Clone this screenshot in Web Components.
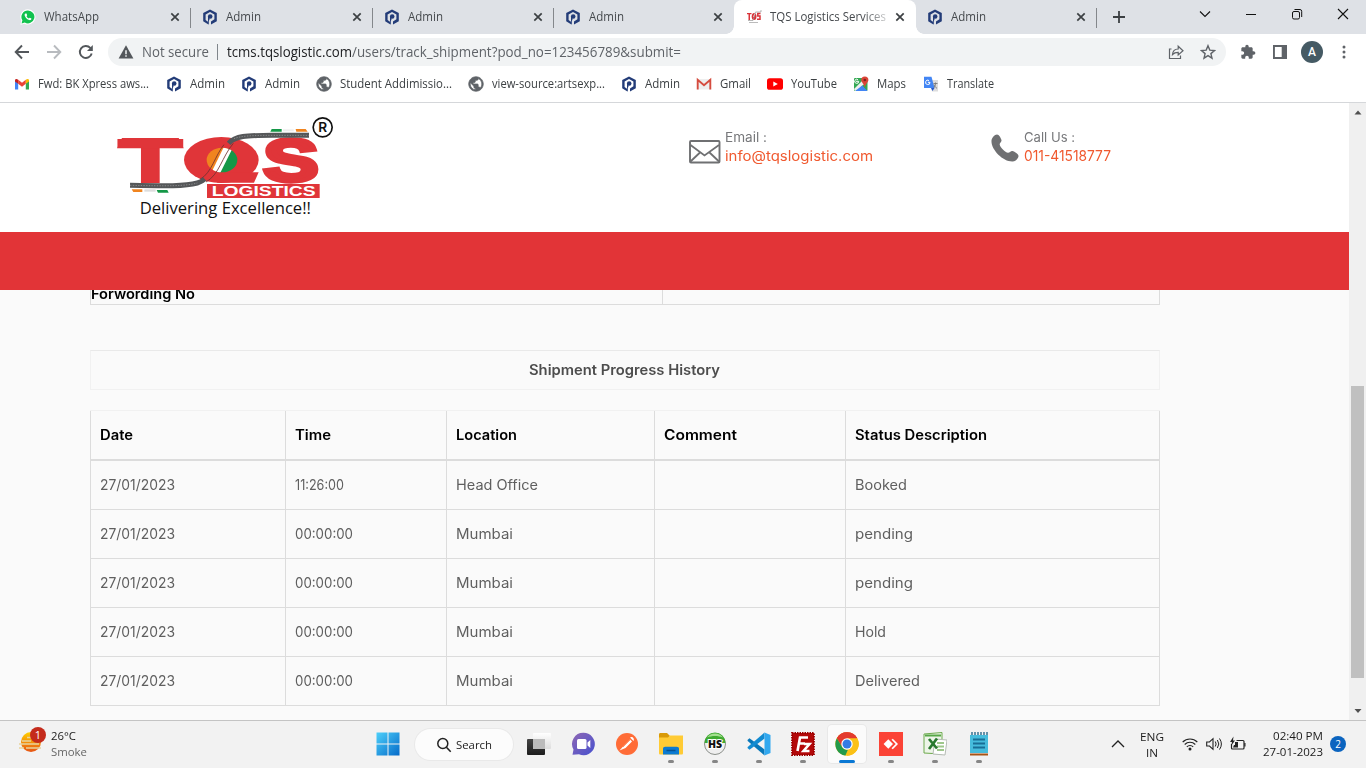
<!DOCTYPE html>
<html lang="en">
<head>
<meta charset="utf-8">
<title>TQS Logistics Services</title>
<style>
html,body{margin:0;padding:0;height:100%;overflow:hidden}
body{font-family:"Open Sans","Noto Sans",sans-serif;font-size:12px;color:#3c4043}
</style>
</head>
<body>
<desktop-screen></desktop-screen>
<script>
const ICONS = {
whatsapp:['0 0 16 16','<path d="M8 .3a7.6 7.6 0 0 0-6.6 11.4L.4 15.7l4.1-1A7.6 7.6 0 1 0 8 .3z" fill="#fff"/><path d="M8 1.4a6.5 6.5 0 0 0-5.6 9.9l-.8 3.1 3.2-.8A6.5 6.5 0 1 0 8 1.4z" fill="#12c24f"/><path d="M5.6 4.4c-.9.2-1.2 1.3-.8 2.3.8 2.200 2.400 3.700 4.500 4.400 1.200.3 2.100-.3 2.100-1.500L9.700 8.700l-.8.9C7.800 9.100 7 8.300 6.500 7.200l.7-.9-.7-1.800z" fill="#fff"/>'],
admin:['0 0 16 16','<path d="M6 15.200V12.800L3.600 11V5.500L8 3l4.400 2.500v4.800L9 12.600v2.900l5.800-3.300V4.100L8 .4 1.200 4.100v8.100z" fill="#233c78"/><circle cx="8.200" cy="7.500" r="2.300" fill="#233c78"/><path d="M6 15.200V8h1.500v2.500L6.800 12v3.500z" fill="#233c78"/>'],
tqs:['0 0 16 16','<path d="M1 4h4.500v1.300H4V11H2.500V5.300H1z" fill="#d9343a"/><ellipse cx="8.100" cy="7.400" rx="2.400" ry="3.500" fill="#d9343a"/><path d="M7.600 7.800 9 4.500" stroke="#fff"/><path d="M14.500 4.500h-2.700v2.600h2.200v3.200h-3" fill="none" stroke="#d9343a" stroke-width="1.500"/><path d="M2 11.500h5L9.500 3h5.500V1" fill="none" stroke="#999" stroke-width=".7"/><path d="M3 13.500h9" stroke="#aaa" stroke-width=".8"/>'],
close:['0 0 16 16','<path d="m4.300 4.300 7.400 7.400m0-7.400-7.400 7.400" stroke="#3c4043" stroke-width="1.700"/>'],
plus:['0 0 16 16','<path d="M8 2v12M2 8h12" stroke="#3c4043" stroke-width="1.800"/>'],
chev:['0 0 16 16','<path d="m3 5.500 5 5 5-5" fill="none" stroke="#111" stroke-width="1.100"/>'],
chevup:['0 0 16 16','<path d="m2 11 6-6 6 6" fill="none" stroke="#222" stroke-width="1.300"/>'],
min:['0 0 16 16','<path d="M3 8.500h10" stroke="#111"/>'],
restore:['0 0 16 16','<rect x="3.500" y="5.500" width="7" height="7.500" rx="1.500" fill="none" stroke="#111"/><path d="M5.500 3.500H11A1.800 1.800 0 0 1 12.700 5.300v5.700" fill="none" stroke="#111"/>'],
wclose:['0 0 16 16','<path d="m3 3 10 10m0-10L3 13" stroke="#111" stroke-width="1.100"/>'],
back:['0 0 16 16','<path d="M15 8H2M8 1.500 1.700 8 8 14.500" fill="none" stroke="#53575b" stroke-width="1.900"/>'],
fwd:['0 0 16 16','<path d="M1 8h13M8 1.500 14.300 8 8 14.500" fill="none" stroke="#b8bbbf" stroke-width="1.900"/>'],
reload:['0 0 16 16','<path d="M13.700 9.500A6 6 0 1 1 12.300 3.900l1.200 1.200" fill="none" stroke="#53575b" stroke-width="1.900"/><path d="M14.800 1v6H9z" fill="#53575b"/>'],
warn:['0 0 16 16','<path d="M8 1.200 15.400 14.500H.6z" fill="#53575b"/><path d="M8 6.200v4M8 11.300v1.500" stroke="#f1f3f4" stroke-width="1.500"/>'],
share:['0 0 16 16','<path d="M3.500 5H1.500v9.500h11v-3" fill="none" stroke="#5f6368" stroke-width="1.200"/><path d="M4.500 10.500c.3-3.600 2.500-5.500 5.700-5.500V2.200l4.800 4.500-4.800 4.200V8.300c-2.500 0-4.200.5-5.700 2.200z" fill="none" stroke="#5f6368" stroke-width="1.200"/>'],
star:['0 0 16 16','<path d="m8 1.700 1.800 4.400 4.700.4-3.600 3.100 1.100 4.600L8 11.700l-4 2.500 1.100-4.600L1.500 6.500l4.700-.4z" fill="none" stroke="#5f6368" stroke-width="1.400"/>'],
puzzle:['0 0 24 24','<path d="M20.500 11H19V7c0-1.100-.9-2-2-2h-4V3.500C13 2.120 11.880 1 10.500 1S8 2.120 8 3.500V5H4c-1.100 0-1.990.9-1.990 2v3.800H3.500c1.490 0 2.700 1.210 2.700 2.700s-1.210 2.700-2.700 2.700H2V20c0 1.100.9 2 2 2h3.800v-1.500c0-1.490 1.210-2.700 2.700-2.700s2.700 1.210 2.700 2.700V22H17c1.100 0 2-.9 2-2v-4h1.500c1.380 0 2.500-1.120 2.500-2.500S21.880 11 20.500 11z" fill="#5f6368"/>'],
panel:['0 0 16 16','<path d="M1 1h14v14H1zm1.900 2v10h6.800V3z" fill="#5f6368" fill-rule="evenodd"/>'],
dots:['0 0 16 16','<g fill="#5f6368"><circle cx="8" cy="3" r="1.500"/><circle cx="8" cy="8" r="1.500"/><circle cx="8" cy="13" r="1.500"/></g>'],
gmail:['0 0 16 16','<path d="M1 4v9.500h3.200V7z" fill="#4285f4"/><path d="M15 4v9.500h-3.200V7z" fill="#34a853"/><path d="M4.200 3.800v4L8 10.700l3.800-2.900v-4L8 6.700z" fill="#ea4335"/><path d="M1 4.300C1 2.800 2.700 2.300 4.200 3.800v4L1 5.500z" fill="#c5221f"/><path d="M15 4.300c0-1.500-1.700-2-3.200-.5v4L15 5.500z" fill="#fbbc04"/>'],
gmailold:['0 0 16 16','<path d="M1 3h14v10.500H1z" fill="#eee"/><path d="M1.700 13.500V3.800L8 9.200l6.300-5.400v9.700" fill="none" stroke="#d54c3f" stroke-width="1.900"/>'],
globe:['1 1 22 22','<circle cx="12" cy="12" r="9" fill="#fff"/><path d="M12 2C6.480 2 2 6.480 2 12s4.480 10 10 10 10-4.480 10-10S17.520 2 12 2zm-1 17.930c-3.950-.49-7-3.850-7-7.930 0-.62.08-1.210.21-1.790L9 15v1c0 1.100.9 2 2 2v1.930zm6.900-2.540c-.26-.81-1-1.390-1.900-1.390h-1v-3c0-.55-.45-1-1-1H8v-2h2c.55 0 1-.45 1-1V7h2c1.100 0 2-.9 2-2v-.41c2.930 1.190 5 4.060 5 7.410 0 2.080-.8 3.970-2.100 5.390z" fill="#5f6368" stroke="#5f6368" stroke-width="1"/>'],
youtube:['0 0 16 16','<rect y="2.300" width="16" height="11.500" rx="2.600" fill="#f00"/><path d="m6.300 5.500 4.500 2.500-4.500 2.500z" fill="#fff"/>'],
maps:['0 0 16 16','<rect x="1" y="2" width="13.500" height="13" rx="1" fill="#34a853"/><path d="m2 15 6.300-6.300L14 15z" fill="#4285f4"/><path d="m1 13 10-10 3 3-12 9z" fill="#eee"/><path d="m4 15 5-5.500 5.500 5.500z" fill="#4285f4"/><path d="M3 5.300h2.700A2 2 0 1 1 5 3.800" stroke="#fff" fill="none"/><path d="M11.800.5a3.600 3.600 0 0 0-3.600 3.600c0 2.400 2.800 3.500 3.600 7.300.8-3.800 3.600-4.900 3.600-7.300A3.600 3.600 0 0 0 11.800.5z" fill="#db4437"/><circle cx="11.800" cy="4" r="1.300" fill="#7b231e"/>'],
translate:['0 0 16 16','<path d="M6 4h9v11.500H9z" fill="#ddd"/><path d="M1 .8h7.500l3 11.200H1z" fill="#4285f4"/><path d="M8 12h3.500L9.500 15z" fill="#2456c8"/><path d="M7 6.300H4.900M7 6.300A2.200 2.200 0 1 1 6 4.500" stroke="#fff" fill="none"/><path d="M10.500 7.500h4M12.500 6.500v1c0 2-1 3.500-2 4.500m.5-3.500c.5 2 2 3 3 4" stroke="#777" stroke-width=".9" fill="none"/>'],
mail:['0 0 32 24','<rect x="1" y="1" width="29.500" height="21.500" rx="1" fill="none" stroke="#6f7072" stroke-width="1.900"/><path d="m1.500 5 14 10.500L30 5M1.500 21.500l9.500-9M30 21.500l-9.500-9" fill="none" stroke="#6f7072" stroke-width="1.800"/>'],
phone:['0 0 28 28','<path d="M.5 6.500C.8 3.800 3.500.5 6 .5c2 0 4 3.500 4.500 5.700.3 1.700-2 2.600-1.800 4.300.4 2.800 5.500 8 8.300 8.300 1.700.1 2.700-2.100 4.500-1.700 2.300.6 5.800 3 6 4.800.2 2.500-3 5.300-6 5.600C12 27.800-.2 15.500.5 6.500z" fill="#6f7072"/>'],
start:['0 0 24 24','<defs><linearGradient id="a" x1="0" y1="0" x2="24" y2="24" gradientUnits="userSpaceOnUse"><stop stop-color="#4fd2fb"/><stop offset="1" stop-color="#0368c8"/></linearGradient></defs><path d="M.5.500h11v11H.5zM12.500.5h11v11h-11zM.5 12.500h11v11H.5zM12.500 12.500h11v11h-11z" fill="url(#a)"/>'],
search:['0 0 16 16','<circle cx="6.800" cy="6.500" r="5" fill="none" stroke="#222" stroke-width="1.500"/><path d="m10.400 10.200 4.300 4.500" stroke="#222" stroke-width="1.600"/>'],
taskview:['0 0 24 24','<defs><linearGradient id="a" x2="0" y2="1"><stop stop-color="#444"/><stop offset="1" stop-color="#1c1c1c"/></linearGradient><linearGradient id="b" x2="0" y2="1"><stop stop-color="#fff"/><stop offset="1" stop-color="#ddd"/></linearGradient></defs><rect x="6" y="1" width="18" height="16" rx="1" fill="url(#b)"/><rect y="7" width="18" height="16" rx="1" fill="url(#a)"/><path d="M6 7h12v10H6z" fill="#bbb"/>'],
chat:['0 0 24 24','<defs><linearGradient id="a" x2="1" y2="1"><stop stop-color="#8f68b4"/><stop offset="1" stop-color="#4650cf"/></linearGradient></defs><path d="M12.500.8A11.200 11.200 0 1 1 8 22.200l-6.500.6 1-5.300A11.200 11.200 0 0 1 12.500.8z" fill="url(#a)"/><rect x="6" y="7" width="9.500" height="10" rx="1.500" fill="#fff"/><path d="m16.500 10.500 2.800-2.500v8l-2.800-2.500z" fill="#fff"/>'],
postman:['0 0 24 24','<circle cx="12" cy="12" r="11" fill="#ff6c37"/><path d="m4.500 18.500 4-4.500 6.500-6.500 2 2L10.500 16zM15 5.500c2-1.700 5 1 3.500 3.500z" fill="#fff"/><path d="m8 15 7-7" stroke="#ff6c37" stroke-width=".7"/>'],
folder:['0 0 24 24','<path d="M0 2.500C0 1.500.5 1 1.500 1H8l2.500 2.500V8H0z" fill="#d99a08"/><path d="M0 5.500h9L11 3.500h13V21c0 1-.5 1.500-1.500 1.500h-21C.5 22.500 0 22 0 21z" fill="#ffcb35"/><path d="M4 22.500V17c0-1.500.8-2.300 2.200-2.300h11.500c1.500 0 2.300.8 2.300 2.300v5.500z" fill="#0c7bd1"/><path d="M7.500 18.500h9" stroke="#065292" stroke-width="1.500"/>'],
hs:['0 0 24 24','<circle cx="12" cy="12" r="10.500" fill="#efefef" stroke="#8b8f8a"/><path d="M1.500 11a10.500 10.500 0 0 1 21 0z" fill="#3faa31"/><path d="M4 5.500a10 10 0 0 1 16 0c-5-2-11-2-16 0z" fill="#a4df8f"/><text x="12" y="16" font-family="Open Sans,sans-serif" font-size="10.500" font-weight="800" text-anchor="middle" fill="#111" stroke="#fff" stroke-width="2" paint-order="stroke">HS</text>'],
vscode:['0 0 24 24','<path d="m.5 8 2-1.800L17.500 17.500V23.500L.7 9z" fill="#0877b9"/><path d="m.5 16 2 1.800L17.500 6.500V.5L.7 15z" fill="#128bd1"/><path d="m17.500.5 6 2.500v18l-6 2.500z" fill="#31a8ef"/>'],
filezilla:['0 0 24 24','<rect x="1" y="1" width="22" height="22" fill="#b30809" stroke="#9c0000" stroke-width="1.800" stroke-dasharray="1.500 1"/><path d="M6.500 19 9 5.500H17M7.500 11.500h6.500M13 12h5.500l-6 7H18.500" fill="none" stroke="#fff" stroke-width="2.600"/>'],
chrome:['0 0 24 24','<circle cx="12" cy="12" r="11.700" fill="#fbc116"/><path d="M12 12 1.900 6.200a11.700 11.700 0 0 1 20.300 0z" fill="#e33b2e"/><path d="M12 6.300h10.200A11.700 11.700 0 0 0 1.900 6.200L7 15z" fill="#e33b2e"/><path d="M1.900 6.200 7.100 15A5.700 5.700 0 0 0 13 17.600l-2.600 6A11.700 11.700 0 0 1 1.900 6.200z" fill="#229a4b"/><path d="m17 14.800-5.300 9a11.700 11.700 0 0 0 10.500-17.500H12z" fill="#fbc116"/><circle cx="12" cy="12" r="5.700" fill="#fff"/><circle cx="12" cy="12" r="4.500" fill="#347be3"/>'],
anydesk:['0 0 24 24','<path d="M0 0h24v24H0z" fill="#fb4336"/><path d="m9.300 7.300 4.700 4.700-4.700 4.700L4.600 12z" fill="#fff"/><path d="m12.500 7.800 1.300-1L19 12l-5.200 5.200-1.300-1L16.700 12z" fill="#fff"/>'],
excel:['0 0 24 24','<path d="M1 2 19 .5V22L1 21z" fill="#edf5e8" stroke="#6daa4c"/><path d="m12 7 12 1-2 15-12-1z" fill="#fff" stroke="#b5bcb4"/><path d="M14 11h7M14 14.500h7M14 18h7" stroke="#9ec78b" stroke-width="2"/><path d="m6 7 8 9.500M14 6.500 6 17" stroke="#29792f" stroke-width="2.700"/><path d="M2 3.500h16" stroke="#56a746" stroke-width="2"/>'],
notepad:['0 0 24 24','<path d="M3 3h18v18H3z" fill="#46bcdc"/><path d="M3 21.500h18v2H3z" fill="#a85416"/><path d="M5 0v3M8 0v3M11 0v3M14 0v3M17 0v3M20 0v3" stroke="#195d83" stroke-width="1.300"/><path d="M6 7.500h12M6 11.500h12M6 15.500h12" stroke="#196f96" stroke-width="1.800"/>'],
weather:['0 0 24 24','<defs><linearGradient id="a" x2="0" y2="1"><stop stop-color="#ffd000"/><stop offset="1" stop-color="#e75314"/></linearGradient></defs><circle cx="12" cy="12" r="10" fill="url(#a)"/><path d="M3 11h9M0 14h20M7 18h15M0 18h5M8 7.500h6" stroke="#e8d39d" stroke-width="1.600"/>'],
wifi:['0 0 16 16','<path d="M.7 6a10.300 10.300 0 0 1 14.600 0M2.700 8.500a7.500 7.500 0 0 1 10.600 0M4.800 10.800a4.500 4.500 0 0 1 6.400 0" fill="none" stroke="#222" stroke-width="1.100"/><circle cx="8" cy="13" r="1.500" fill="#222"/>'],
sound:['0 0 16 16','<path d="M.7 6h2.800L7 2.700v10.600L3.500 10H.7z" fill="none" stroke="#222" stroke-width="1.100"/><path d="M9.300 5.500q1.600 2.500 0 5M11.400 4q2.800 4 0 8M13.500 2.500q3.800 5.500 0 11" fill="none" stroke="#222"/>'],
battery:['0 0 16 16','<path d="M6.500 4.500H13a1 1 0 0 1 1 1v6.500a1 1 0 0 1-1 1H2.500a1 1 0 0 1-1-1V8" fill="none" stroke="#222" stroke-width="1.200"/><path d="M14.300 7h1.200v3.500h-1.200zM4 9h4v2.500H3zM5 6h3v3.500H5zM3.500.5 0 6h2l-1 4 4-5.500H3z" fill="#222"/>'],
up:['0 0 16 16','<path d="m4.500 11.500 3.500-4 3.500 4z" fill="#505050"/>'],
down:['0 0 16 16','<path d="m4.500 5 3.500 4 3.500-4z" fill="#505050"/>']
};
const define = (name, cls) => customElements.define(name, cls);
class Base extends HTMLElement {
  constructor(){ super(); this.attachShadow({mode:'open'}); }
  connectedCallback(){ if(!this.done){ this.done = true; this.shadowRoot.innerHTML = this.render(); this.ready && this.ready(); } }
  a(n){ return this.getAttribute(n) || ''; }
}
define('x-icon', class extends Base {
  render(){
    const [vb, body] = ICONS[this.a('name')];
    const w = this.a('size') || 16, h = this.a('h') || w;
    return `<style>:host{display:block;flex:none;width:${w}px;height:${h}px}svg{display:block;width:100%;height:100%}</style><svg viewBox="${vb}">${body}</svg>`;
  }
});
/* A single line of text, stretched to the width given in "w". */
define('x-text', class extends Base {
  render(){ return `<style>:host{display:block;flex:none;white-space:pre;width:${this.a('w')}px}span{display:inline-block;transform-origin:0 50%}</style><span><slot></slot></span>`; }
  ready(){
    const s = this.shadowRoot.querySelector('span');
    const n = s.getBoundingClientRect().width;
    if(n) s.style.transform = `scaleX(${this.a('w')/n})`;
  }
});
define('browser-tab', class extends Base {
  render(){
    return `<style>
    :host{display:flex;align-items:center;box-sizing:border-box;flex:none;width:${this.a('width')}px;height:34px;padding:0 8px 0 11px;position:relative;font-size:12px;line-height:18px;color:#45494d}
    :host([icon="whatsapp"]),:host([active]){padding-left:12px}
    :host([active]){background:#fff;border-radius:8px 8px 0 0}
    :host([sep])::after{content:"";position:absolute;right:0;top:8px;width:1px;height:20px;background:#84878b}
    :host([active])::before{content:"";position:absolute;left:-8px;right:-8px;bottom:0;height:8px;background:radial-gradient(circle at 0 0,transparent 7.500px,#fff 8px) 0 0/8px 8px no-repeat,radial-gradient(circle at 100% 0,transparent 7.500px,#fff 8px) 100% 0/8px 8px no-repeat}
    x-text{margin-left:8px} .c{margin-left:auto}
    :host([active]) x-text{-webkit-mask:linear-gradient(90deg,#000 80%,#0004);mask:linear-gradient(90deg,#000 80%,#0004)}
    </style><x-icon name="${this.a('icon')}"></x-icon><x-text w="${this.a('w')}">${this.a('label')}</x-text><x-icon class="c" name="close"></x-icon>`;
  }
});
define('tab-strip', class extends Base {
  render(){
    const t=(wd,ic,l,w,x='sep')=>`<browser-tab width="${wd}" icon="${ic}" label="${l}" w="${w}" ${x}></browser-tab>`;
    return `<style>:host{display:flex;height:34px;background:#dee1e6;padding-left:8px}.plus{margin:9px 0 0 14px}.win{display:flex;gap:30px;margin:6px 15px 0 auto}</style>
    ${t(183,'whatsapp','WhatsApp',55)}${t(182,'admin','Admin',35)}${t(181,'admin','Admin',35)}${t(180,'admin','Admin',35,'')}${t(182,'tqs','TQS Logistics Services',116,'active')}${t(181,'admin','Admin',35)}
    <x-icon class="plus" name="plus"></x-icon>
    <div class="win"><x-icon name="chev"></x-icon><x-icon name="min"></x-icon><x-icon name="restore"></x-icon><x-icon name="wclose"></x-icon></div>`;
  }
});
define('address-bar', class extends Base {
  render(){ return `<style>
    :host{display:flex;align-items:center;height:36px;padding:0 14px;background:#fff;font-size:14px;line-height:20px;color:#5f6368}
    .nav{display:flex;gap:16px;width:94px;flex:none}
    .omni{display:flex;align-items:center;box-sizing:border-box;width:1118px;flex:none;height:28px;border-radius:14px;background:#f1f3f4;padding:0 10px}
    .not{margin-left:8px}.bar{width:1px;height:16px;background:#80868b;margin:0 9px 0 8px}
    .host{color:#202124}.share{margin:0 16px 0 auto}
    .tools{display:flex;align-items:center;margin-left:14px;gap:16px;flex:none}
    .av{width:22px;height:22px;border-radius:50%;background:#455a64;color:#fff;font:500 12px/22px Roboto,sans-serif;text-align:center;margin:0 -3px}
    </style><div class="nav"><x-icon name="back"></x-icon><x-icon name="fwd"></x-icon><x-icon name="reload"></x-icon></div>
    <div class="omni"><x-icon name="warn"></x-icon><x-text class="not" w="67">Not secure</x-text><div class="bar"></div><x-text class="host" w="125">tcms.tqslogistic.com</x-text><x-text w="329">/users/track_shipment?pod_no=123456789&amp;submit=</x-text><x-icon class="share" name="share"></x-icon><x-icon name="star"></x-icon></div>
    <div class="tools"><x-icon name="puzzle"></x-icon><x-icon name="panel"></x-icon><div class="av">A</div><x-icon name="dots"></x-icon></div>`; }
});
define('bookmarks-bar', class extends Base {
  render(){
    const b=(s,ic,l,w)=>`<div class="b" style="width:${s}px"><x-icon name="${ic}"></x-icon><x-text w="${w}">${l}</x-text></div>`;
    return `<style>:host{display:flex;height:32px;padding:0 14px 0;background:#fff;border-bottom:1px solid #d5d7da;line-height:18px;box-sizing:content-box}
    .b{display:flex;align-items:center;gap:8px;flex:none;height:28px}</style>
    ${b(152,'gmail','Fwd: BK Xpress aws...',111)}${b(75,'admin','Admin',35)}${b(75,'admin','Admin',35)}${b(152,'globe','Student Addimissio...',112)}${b(153,'globe','view-source:artsexp...',113)}${b(75,'admin','Admin',35)}${b(71,'gmailold','Gmail',31)}${b(86,'youtube','YouTube',46)}${b(70,'maps','Maps',29)}${b(80,'translate','Translate',47)}`;
  }
});
define('tqs-logo', class extends Base {
  render(){ return `<style>:host{display:block;width:250px;height:130px}svg{display:block}</style>
  <svg width="250" height="130" viewBox="0 0 750 390">
  <defs><clipPath id="o"><ellipse cx="366" cy="168" rx="46" ry="37"/></clipPath></defs>
  <g fill="#e03539" stroke="#e03539" font-family="Liberation Sans,sans-serif" font-weight="bold">
  <text x="54" y="233" font-size="184" stroke-width="6" textLength="194" lengthAdjust="spacingAndGlyphs">T</text>
  <path d="M66 102h170l15 31H51z" stroke="none"/>
  <ellipse cx="364" cy="168" rx="112" ry="69" stroke="none"/>
  <path d="M380 205h96l-14 31H350z" stroke="none"/>
  <text x="490" y="230" font-size="176" stroke-width="13" textLength="166" lengthAdjust="spacingAndGlyphs">S</text></g>
  <g clip-path="url(#o)"><path d="M310 125h78l-42 85h-36z" fill="#f0841f"/><path d="M385 125h40v85h-75z" fill="#149747"/><path d="m372 128 26 4-38 76-24-6z" fill="#fff"/></g>
  <g fill="none">
  <path d="M300 226c36-20 44-70 72-104M318 234c40-22 48-76 82-116" stroke="#70302f" stroke-width="2.500"/>
  <path d="M90 244c110 2 165 3 202-7q14-4 22-12M386 118c20-22 50-24 131-24h110" stroke="#555759" stroke-width="15"/>
  <path d="M90 244c110 2 165 3 202-7M402 104c20-8 50-10 115-10h110" stroke="#bbb" stroke-width="1.500" stroke-dasharray="4 4"/></g>
  <path d="M515 75h30v8h-34z" fill="#149747"/><path d="M549 76h32v6h-32z" fill="#eee"/><path d="M587 75h30l6 8h-34z" fill="#f0841f"/>
  <path d="M95 256h32v8h-27z" fill="#f0841f"/><path d="M133 256h34v7h-34z" fill="#ddd"/><path d="M170 258h32l4 8h-32z" fill="#149747"/>
  <path d="M321 240h338v42H321z" fill="#e03539"/>
  <text x="335" y="277" font-family="Liberation Sans,sans-serif" font-weight="bold" font-size="43" fill="#fff" textLength="312" lengthAdjust="spacingAndGlyphs">LOGISTICS</text>
  <text x="119" y="329" font-family="Open Sans,sans-serif" font-size="50" fill="#111" textLength="514" lengthAdjust="spacingAndGlyphs">Delivering Excellence!!</text>
  <circle cx="668" cy="70" r="28.500" fill="none" stroke="#111" stroke-width="5"/>
  <text x="668" y="85" text-anchor="middle" font-family="Inter,sans-serif" font-weight="600" font-size="41" fill="#111">R</text></svg>`; }
});
define('contact-item', class extends Base {
  render(){ return `<style>:host{display:flex;align-items:flex-start;font-family:Inter,sans-serif;color:#77787b}
  div{margin-left:${this.a('gap')}px}.l{font-size:13px;line-height:18px}.v{font-size:14px;line-height:20px;color:#f0592f}x-icon{margin-top:${this.a('top')}px}</style>
  <x-icon name="${this.a('icon')}" size="${this.a('s')}" h="${this.a('h')}"></x-icon><div><x-text class="l" w="${this.a('lw')}">${this.a('label')}</x-text><x-text class="v" w="${this.a('w')}">${this.a('value')}</x-text></div>`; }
});
define('site-header', class extends Base {
  render(){ return `<style>:host{display:block}.top{display:flex;height:128px;background:#fff;padding:1px 0 0 100px}
  .mail{margin:24px 0 0 339px;width:302px}.call{margin-top:24px}.red{height:58px;background:#e23437}</style>
  <div class="top"><tqs-logo></tqs-logo><contact-item class="mail" icon="mail" s="32" h="24" top="12" gap="4" lw="42" w="148" label="Email :" value="info@tqslogistic.com"></contact-item>
  <contact-item class="call" icon="phone" s="28" h="28" top="6" gap="5" lw="51" w="87" label="Call Us :" value="011-41518777"></contact-item></div><div class="red"></div>`; }
});
define('progress-table', class extends Base {
  render(){
    const T=(t,w)=>t?`<x-text w="${w}">${t}</x-text>`:'';
    const row=(c,cls='')=>`<div class="r ${cls}">${c.map(([t,w])=>`<div>${T(t,w)}</div>`).join('')}</div>`;
    const r=(tm,tw,l,lw,s,sw)=>row([['27/01/2023',75],[tm,tw],[l,lw],['',0],[s,sw]]);
    return `<style>:host{display:block;border-top:1px solid #f1f1f1;color:#5f5f5f;font-size:14px;line-height:20px}
    .r{display:grid;grid-template-columns:196px 161px 208px 191px 314px;height:48px;border-bottom:1px solid #dcdcdc}
    .r>div{display:flex;align-items:center;padding-left:9px;border-right:1px solid #dcdcdc}
    .r>div:first-child{border-left:1px solid #dcdcdc;padding-left:8.500px}
    .h{border-bottom-width:2px;font-weight:600;color:#000}</style>
    ${row([['Date',33],['Time',36],['Location',61],['Comment',73],['Status Description',132]],'h')}
    ${r('11:26:00',49,'Head Office',82,'Booked',52)}${r('00:00:00',58,'Mumbai',57,'pending',58)}${r('00:00:00',58,'Mumbai',57,'pending',58)}${r('00:00:00',58,'Mumbai',57,'Hold',31)}${r('00:00:00',58,'Mumbai',57,'Delivered',65)}`;
  }
});
define('scroll-bar', class extends Base {
  render(){ return `<style>:host{display:flex;flex-direction:column;width:17px;height:617px;background:#f0f0f0;align-items:center}
  .t{width:13px;height:292px;margin-top:267px;background:#c0c0c0}.d{margin-top:auto}</style><x-icon name="up"></x-icon><div class="t"></div><x-icon class="d" name="down"></x-icon>`; }
});
define('web-page', class extends Base {
  render(){ return `<style>:host{display:flex;height:617px;background:#fafafa;font-family:Inter,sans-serif;overflow:hidden}
  main{width:1349px}.body{width:1070px;margin-left:90px}
  .fwd{height:14px;display:grid;grid-template-columns:571px 497px;border:1px solid #dcdcdc;border-top:0;overflow:hidden;font-weight:600;font-size:14px;line-height:20px;color:#000}
  .fwd div+div{border-left:1px solid #dcdcdc}.fwd x-text{margin-top:-6px}
  .title{box-sizing:border-box;height:40px;margin:45px 0 20px;border:1px solid #f1f1f1;border-top-color:#e9e9e9;display:flex;align-items:center;justify-content:center;font-weight:600;font-size:14px;line-height:20px;color:#4d4d4d}.title x-text{margin-right:1px}</style>
  <main><site-header></site-header><div class="body"><div class="fwd"><div><x-text w="104">Forwording No</x-text></div><div></div></div>
  <div class="title"><x-text w="191">Shipment Progress History</x-text></div><progress-table></progress-table></div></main><scroll-bar></scroll-bar>`; }
});
define('task-app', class extends Base {
  render(){ return `<style>:host{display:flex;flex-direction:column;align-items:center;box-sizing:border-box;width:44px;height:47px;padding-top:11px;flex:none}
  .i{display:flex;justify-content:center;width:38px;height:38px;margin-top:-7px;padding-top:7px;box-sizing:border-box;border-radius:4px;flex:none}
  :host([active]) .i{background:#fbfbfb;box-shadow:0 0 0 1px #e8e8e8}
  .m{width:6px;height:3px;border-radius:2px;margin-top:-3px;z-index:1}:host([run]) .m{background:#868686}:host([active]) .m{width:16px;background:#0a78d4}
  </style><div class="i"><x-icon name="${this.a('icon')}" size="24"></x-icon></div><div class="m"></div>`; }
});
define('task-bar', class extends Base {
  render(){ return `<style>
  :host{display:flex;box-sizing:border-box;height:48px;border-top:1px solid #c4c4c4;background:#f2f2f2;color:#1b1b1b;line-height:16px;font-size:11.500px}
  .w{display:flex;width:366px;position:relative}.w x-icon{margin:9px 8px 0 19px}.w div{padding-top:7px}.g{color:#666}
  .n{position:absolute;left:30px;top:6px;width:16px;height:16px;padding:0!important;border-radius:50%;background:#c42b1c;color:#fff;text-align:center;font-size:11px}
  .s{display:flex;align-items:center;gap:4px;box-sizing:border-box;width:98px;height:31px;margin:8px 4px 0 5px;border-radius:16px;background:#fcfcfc;padding-left:21px;box-shadow:0 0 0 1px #e9e9e9}
  .tray{display:flex;margin-left:auto;padding-right:20px}
  .tray>x-icon{margin:15px 8px 0 0}.tray .up{margin:15px 14px 0 0}.lang{margin:8px 18px 0 0;display:flex;flex-direction:column;align-items:center}
  .clock{margin:7px 7px 0 17px;display:flex;flex-direction:column;align-items:flex-end}
  .b{width:16px;height:16px;margin-top:15px;border-radius:50%;background:#0b64bf;color:#fff;text-align:center;font-size:10px}
  </style>
  <div class="w"><x-icon name="weather" size="24"></x-icon><div><x-text w="25">26°C</x-text><x-text class="g" w="36">Smoke</x-text></div><div class="n">1</div></div>
  <task-app icon="start"></task-app><div class="s"><x-icon name="search"></x-icon><x-text w="36">Search</x-text></div>
  <task-app icon="taskview"></task-app><task-app icon="chat"></task-app><task-app icon="postman"></task-app><task-app run icon="folder"></task-app><task-app run icon="hs"></task-app><task-app run icon="vscode"></task-app><task-app run icon="filezilla"></task-app><task-app run active icon="chrome"></task-app><task-app run icon="anydesk"></task-app><task-app run icon="excel"></task-app><task-app run icon="notepad"></task-app>
  <div class="tray"><x-icon class="up" name="chevup" size="16"></x-icon><div class="lang"><x-text w="24">ENG</x-text><x-text w="12">IN</x-text></div>
  <x-icon name="wifi"></x-icon><x-icon name="sound"></x-icon><x-icon style="margin-right:0" name="battery"></x-icon>
  <div class="clock"><x-text w="50">02:40 PM</x-text><x-text w="60">27-01-2023</x-text></div><div class="b">2</div></div>`; }
});
define('desktop-screen', class extends Base {
  render(){ return `<style>:host{display:block;width:1366px;height:768px;overflow:hidden}</style><tab-strip></tab-strip><address-bar></address-bar><bookmarks-bar></bookmarks-bar><web-page></web-page><task-bar></task-bar>`; }
});
</script>
</body>
</html>
